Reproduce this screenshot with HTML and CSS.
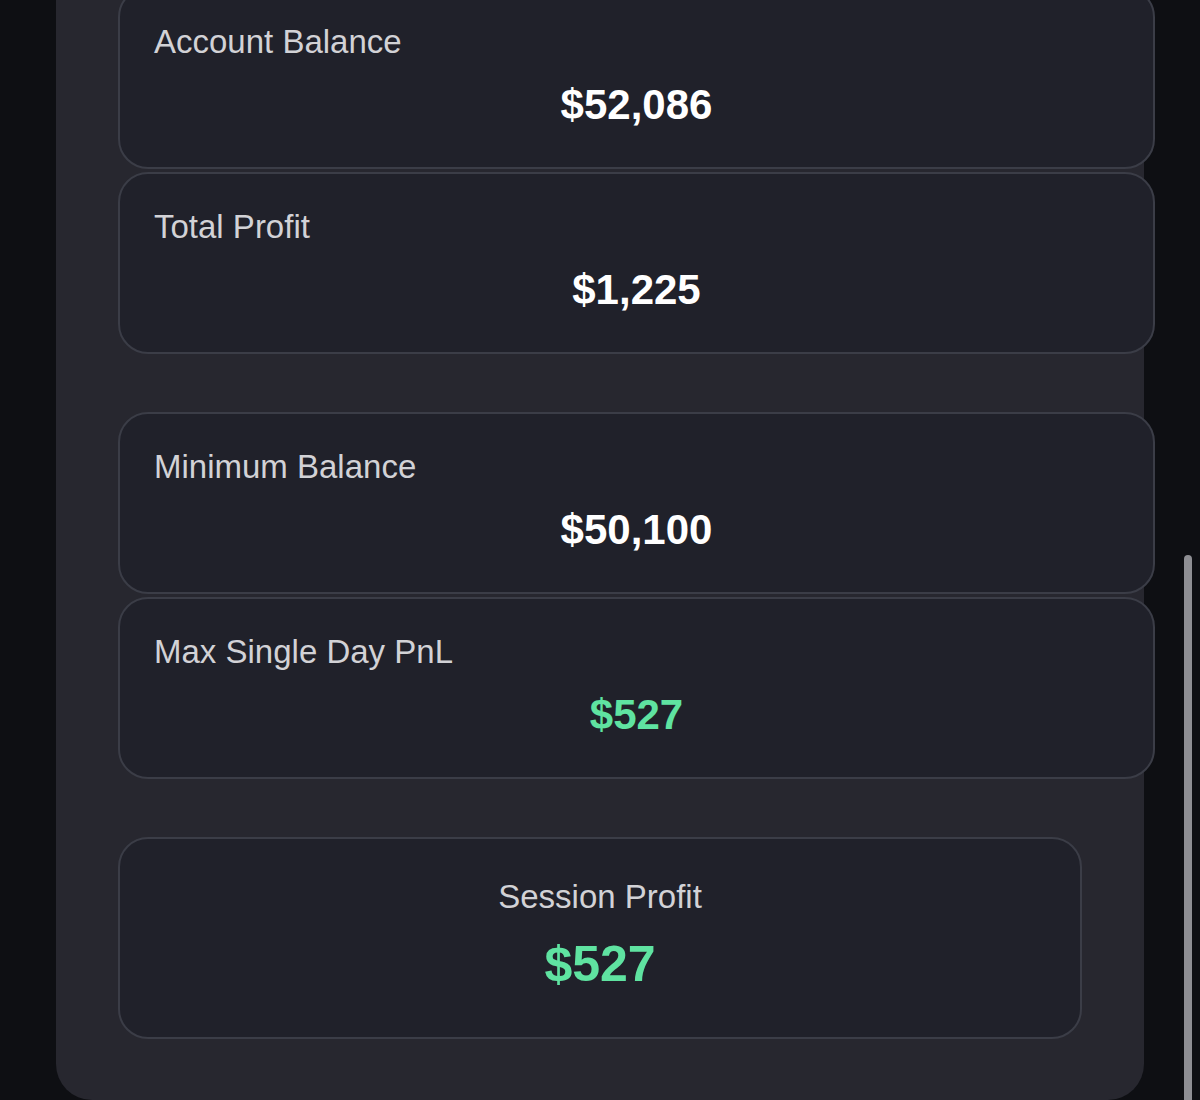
FILE: index.html
```html
<!DOCTYPE html>
<html lang="en">
<head>
    <meta charset="UTF-8">
    <meta name="viewport" content="width=device-width, initial-scale=1.0">
    <title>Account Stats</title>
    <link rel="stylesheet" href="styles.css">
</head>
<body>

<div class="panel">
    <div class="stat-group first">
        <div class="stat-card">
            <div class="stat-label">Account Balance</div>
            <div class="stat-value">$52,086</div>
        </div>
        <div class="stat-card">
            <div class="stat-label">Total Profit</div>
            <div class="stat-value">$1,225</div>
        </div>
    </div>

    <div class="stat-group">
        <div class="stat-card">
            <div class="stat-label">Minimum Balance</div>
            <div class="stat-value">$50,100</div>
        </div>
        <div class="stat-card">
            <div class="stat-label">Max Single Day PnL</div>
            <div class="stat-value positive">$527</div>
        </div>
    </div>

    <div class="session-card">
        <div class="session-label">Session Profit</div>
        <div class="session-value positive">$527</div>
    </div>
</div>

<div class="scroll-thumb"></div>

</body>
</html>
```

FILE: styles.css
```css
body {
    font-family: 'Liberation Sans', Arial, sans-serif;
    background-color: #0e0f13;
    margin: 0;
    padding: 0;
    overflow: hidden;
}
.panel {
    width: 1088px;
    margin-left: 56px;
    margin-top: -13px;
    box-sizing: border-box;
    padding: 0 62px 61px;
    background: #27272f;
    border-radius: 0 0 36px 36px;
}
.stat-group {
    display: flex;
    flex-direction: column;
    gap: 3px;
    width: 1037px;
    margin-bottom: 58px;
}
.stat-card {
    background: #20212a;
    border: 2px solid #3b3d47;
    border-radius: 30px;
    padding: 34px 34px 30px;
    height: 182px;
    box-sizing: border-box;
}
.stat-label {
    font-size: 33px;
    color: #d2d2d6;
    margin-bottom: 20px;
}
.stat-value {
    font-size: 42px;
    font-weight: bold;
    color: #ffffff;
    text-align: center;
}
.positive {
    color: #5fe3a1;
}
.session-card {
    background: #20212a;
    border: 2px solid #3b3d47;
    border-radius: 30px;
    padding: 39px 34px 30px;
    height: 202px;
    box-sizing: border-box;
    text-align: center;
}
.session-label {
    font-size: 33px;
    color: #d2d2d6;
    margin-bottom: 19px;
}
.session-value {
    font-size: 50px;
    font-weight: bold;
}
.scroll-thumb {
    position: absolute;
    left: 1184px;
    top: 555px;
    width: 8px;
    height: 560px;
    border-radius: 4px;
    background: #8e8e93;
}
```
